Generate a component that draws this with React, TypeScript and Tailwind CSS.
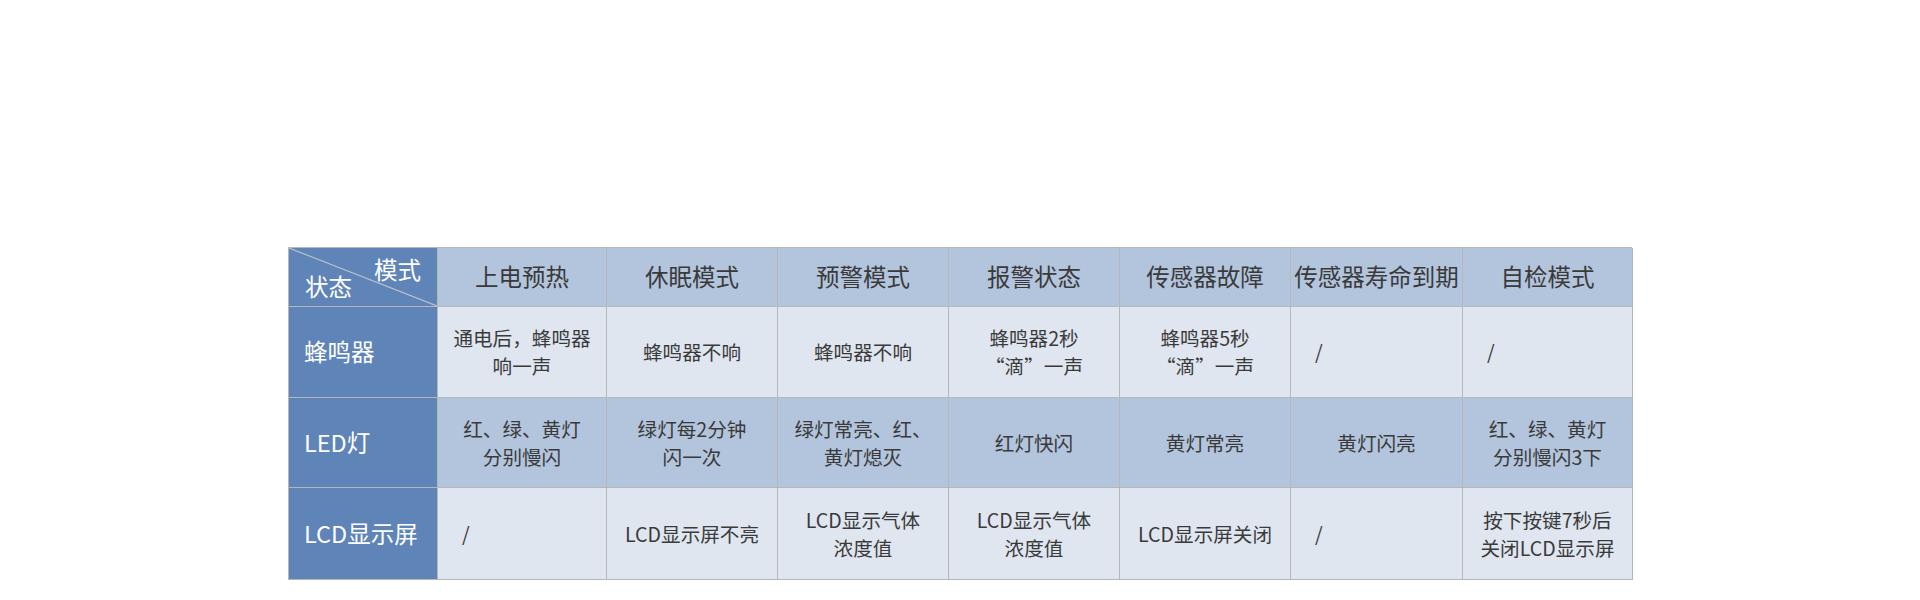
const modes = ['上电预热', '休眠模式', '预警模式', '报警状态', '传感器故障', '传感器寿命到期', '自检模式'];

type Cell = string[] | '/';

const rows: { label: string; bg: string; cells: Cell[] }[] = [
  {
    label: '蜂鸣器',
    bg: 'bg-[#dfe6f0]',
    cells: [
      ['通电后，蜂鸣器', '响一声'],
      ['蜂鸣器不响'],
      ['蜂鸣器不响'],
      ['蜂鸣器2秒', '“滴”一声'],
      ['蜂鸣器5秒', '“滴”一声'],
      '/',
      '/',
    ],
  },
  {
    label: 'LED灯',
    bg: 'bg-[#b3c4dd]',
    cells: [
      ['红、绿、黄灯', '分别慢闪'],
      ['绿灯每2分钟', '闪一次'],
      ['绿灯常亮、红、', '黄灯熄灭'],
      ['红灯快闪'],
      ['黄灯常亮'],
      ['黄灯闪亮'],
      ['红、绿、黄灯', '分别慢闪3下'],
    ],
  },
  {
    label: 'LCD显示屏',
    bg: 'bg-[#dfe6f0]',
    cells: [
      '/',
      ['LCD显示屏不亮'],
      ['LCD显示气体', '浓度值'],
      ['LCD显示气体', '浓度值'],
      ['LCD显示屏关闭'],
      '/',
      ['按下按键7秒后', '关闭LCD显示屏'],
    ],
  },
];

const rowHeights = ['h-[91px]', 'h-[90px]', 'h-[92px]'];

export default function App() {
  return (
    <div className="w-[1920px] h-[600px] bg-white pt-[247px] pl-[288px] font-['Noto_Sans_CJK_SC',sans-serif]">
      <div className="grid grid-cols-[149px_169px_171px_171px_171px_171px_172px_170px] w-[1344px] border-l border-t border-[#b7b7b7]">
        {/* header row */}
        <div className="relative h-[59px] bg-[#5f84b7] border-r border-b border-[#b7b7b7] text-white text-[23.5px] leading-none">
          <svg className="absolute inset-0 w-full h-full" viewBox="0 0 148 58" preserveAspectRatio="none">
            <line x1="0" y1="0" x2="148" y2="58" stroke="#b8bfca" strokeWidth="1.2" />
          </svg>
          <div className="absolute right-[16px] top-[10px]">模式</div>
          <div className="absolute left-[16px] bottom-[8px]">状态</div>
        </div>
        {modes.map((m) => (
          <div
            key={m}
            className="h-[59px] bg-[#b3c4dd] border-r border-b border-[#b7b7b7] flex items-center justify-center text-[23.5px] text-[#3a3a3a] whitespace-nowrap"
          >
            {m}
          </div>
        ))}

        {rows.map((r, ri) => (
          <div key={r.label} className="contents">
            <div
              className={`${rowHeights[ri]} bg-[#5f84b7] border-r border-b border-[#b7b7b7] flex items-center pl-[15px] text-white text-[23.5px]`}
            >
              {r.label}
            </div>
            {r.cells.map((c, ci) => (
              <div
                key={ci}
                className={`${rowHeights[ri]} ${r.bg} border-r border-b border-[#b7b7b7] flex items-center text-[19.6px] leading-[28px] text-[#3a3a3a] whitespace-nowrap ${
                  c === '/' ? 'justify-start pl-[24px]' : 'flex-col justify-center'
                }`}
              >
                {c === '/' ? '/' : c.map((line) => <div key={line}>{line}</div>)}
              </div>
            ))}
          </div>
        ))}
      </div>
    </div>
  );
}
